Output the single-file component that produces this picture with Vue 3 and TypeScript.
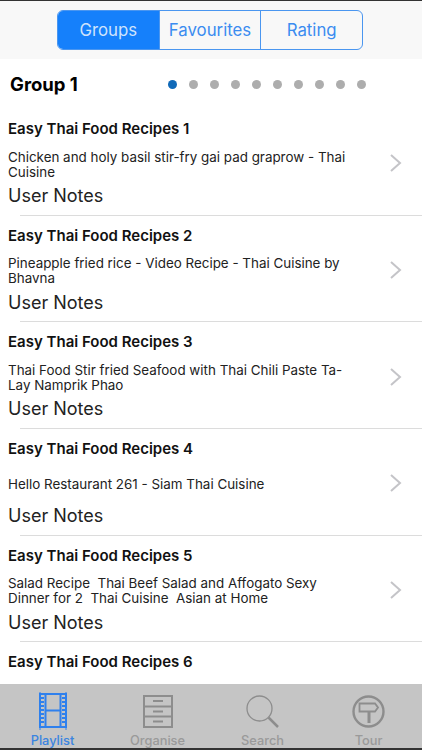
<script setup lang="ts">
const segments = ['Groups', 'Favourites', 'Rating']
const dots = Array.from({ length: 10 }, (_, i) => i)
const rows = [
  { title: 'Easy Thai Food Recipes 1', lines: ['Chicken and holy basil stir-fry gai pad graprow - Thai', 'Cuisine'], full: true },
  { title: 'Easy Thai Food Recipes 2', lines: ['Pineapple fried rice - Video Recipe - Thai Cuisine by', 'Bhavna'], full: true },
  { title: 'Easy Thai Food Recipes 3', lines: ['Thai Food Stir fried Seafood with Thai Chili Paste Ta-', 'Lay Namprik Phao'], full: true },
  { title: 'Easy Thai Food Recipes 4', lines: ['Hello Restaurant 261 - Siam Thai Cuisine'], full: true },
  { title: 'Easy Thai Food Recipes 5', lines: ['Salad Recipe\u00a0 Thai Beef Salad and Affogato Sexy', 'Dinner for 2\u00a0 Thai Cuisine\u00a0 Asian at Home'], full: true },
  { title: 'Easy Thai Food Recipes 6', lines: [] as string[], full: false },
]
</script>

<template>
  <div class="screen">
    <header class="top">
      <div class="seg">
        <div v-for="(s, i) in segments" :key="s" class="seg-item" :class="{ active: i === 0 }">{{ s }}</div>
      </div>
    </header>
    <div class="group">
      <h1>Group 1</h1>
      <div class="dots">
        <span v-for="d in dots" :key="d" class="dot" :class="{ on: d === 0 }"></span>
      </div>
    </div>
    <main class="list">
      <section v-for="r in rows" :key="r.title" class="row">
        <div class="body">
          <h2>{{ r.title }}</h2>
          <template v-if="r.full">
            <div class="desc"><div><div v-for="l in r.lines" :key="l">{{ l }}</div></div></div>
            <div class="notes">User Notes</div>
          </template>
        </div>
        <svg v-if="r.full" class="chev" width="13" height="20" viewBox="0 0 13 20"><path d="M2 2l9 8-9 8" fill="none" stroke="#c4c4c8" stroke-width="2"/></svg>
      </section>
    </main>
    <nav class="tabs">
      <div class="tab active">
        <svg width="28" height="38" viewBox="0 0 28 38">
          <g fill="none" stroke="#2f80ed" stroke-width="2">
            <rect x="1" y="2" width="26" height="33"/>
            <path d="M6.500 2v33M21.500 2v33M6.500 18.500h15"/>
            <path d="M1 0v38M27 0v38" stroke-width="1"/>
          </g>
          <path d="M2 5h3v2H2zM2 9h3v2H2zM2 13h3v2H2zM2 17h3v2H2zM2 21h3v2H2zM2 25h3v2H2zM2 29h3v2H2zM23 5h3v2h-3zM23 9h3v2h-3zM23 13h3v2h-3zM23 17h3v2h-3zM23 21h3v2h-3zM23 25h3v2h-3zM23 29h3v2h-3z" fill="#2f80ed"/>
        </svg>
        <span>Playlist</span>
      </div>
      <div class="tab">
        <svg class="mid" width="30" height="33" viewBox="0 0 30 33">
          <g fill="none" stroke="#8d8d8d" stroke-width="2">
            <rect x="1" y="1" width="28" height="31"/>
            <path d="M1 11.500h28M1 21.500h28"/>
            <path d="M10 6h10M10 16.500h10M10 26.500h10"/>
          </g>
        </svg>
        <span>Organise</span>
      </div>
      <div class="tab">
        <svg class="mid" width="33" height="33" viewBox="0 0 33 33">
          <circle cx="13.500" cy="13.500" r="12.500" fill="none" stroke="#8d8d8d" stroke-width="1.300"/>
          <path d="M22.500 22.500l9.500 9.500" stroke="#8d8d8d" stroke-width="2.500" fill="none"/>
        </svg>
        <span>Search</span>
      </div>
      <div class="tab">
        <svg class="mid" width="33" height="33" viewBox="0 0 33 33">
          <circle cx="16.500" cy="16.500" r="15" fill="none" stroke="#8d8d8d" stroke-width="2.400"/>
          <path d="M7.500 8.500h15.500l3 4-3 4H7.500z" fill="none" stroke="#8d8d8d" stroke-width="1.800"/>
          <path d="M17 16.500v11.500" stroke="#8d8d8d" stroke-width="3" fill="none"/>
        </svg>
        <span>Tour</span>
      </div>
    </nav>
  </div>
</template>

<style>
html, body { margin: 0; background: #fff; }
</style>

<style scoped>
.screen {
  width: 422px; height: 750px; overflow: hidden; display: flex; flex-direction: column;
  font-family: Inter, "Liberation Sans", sans-serif; color: #000; background: #fff;
  border-top: 1px solid #333; box-sizing: border-box;
}
.top { height: 58px; flex: none; background: #f8f8f8; display: flex; justify-content: center; padding: 9px 2px 0 0; box-sizing: border-box; }
.seg { display: flex; height: 40px; width: 306px; box-sizing: border-box; border: 1.500px solid #4a96f0; border-radius: 6px; overflow: hidden; }
.seg-item { display: flex; align-items: center; justify-content: center; font-size: 16.800px; color: #3b8cf0; border-left: 1.500px solid #4a96f0; flex: 1 1 0; box-sizing: border-box; }
.seg-item:first-child { border-left: 0; }
.seg-item.active { background: #1580fb; color: #cfe3fb; }
.group { height: 50px; flex: none; display: flex; align-items: center; padding-left: 10px; box-sizing: border-box; }
h1 { margin: 0; font-size: 18.500px; font-weight: 700; width: 158px; }
.dots { display: flex; gap: 12px; }
.dot { width: 9px; height: 9px; border-radius: 50%; background: #adadad; }
.dot.on { background: #1069b8; }
.list { flex: 1; min-height: 0; overflow: hidden; }
.row { height: 106.700px; box-sizing: border-box; position: relative; display: flex; align-items: center; padding: 0 20px 0 8px; }
.row + .row::before { content: ""; position: absolute; top: -1px; left: 20px; right: 0; height: 1px; background: #dcdcdc; }
.body { flex: 1; display: flex; flex-direction: column; height: 100%; }
h2 { margin: 11px 0 0; font-size: 15px; line-height: 17px; font-weight: 600; color: #111; }
.desc { height: 41px; margin-top: 7px; display: flex; align-items: center; font-size: 13.400px; line-height: 15px; color: #222; }
.notes { font-size: 18px; line-height: 22px; color: #222; }
.chev { flex: none; margin-top: 2px; }
.tabs { height: 66px; flex: none; display: grid; grid-template-columns: 105px 105px 105px 107px; background: #c5c5c5; border-bottom: 2px solid #333; box-sizing: border-box; }
.tab { display: flex; flex-direction: column; align-items: center; justify-content: flex-end; font-size: 12.800px; font-weight: 500; color: #9a9a9a; }
.tab span { line-height: 15px; margin-top: 3px; }
.tab .mid { margin-bottom: 2px; }
.tab.active { color: #3a84e0; }
</style>
